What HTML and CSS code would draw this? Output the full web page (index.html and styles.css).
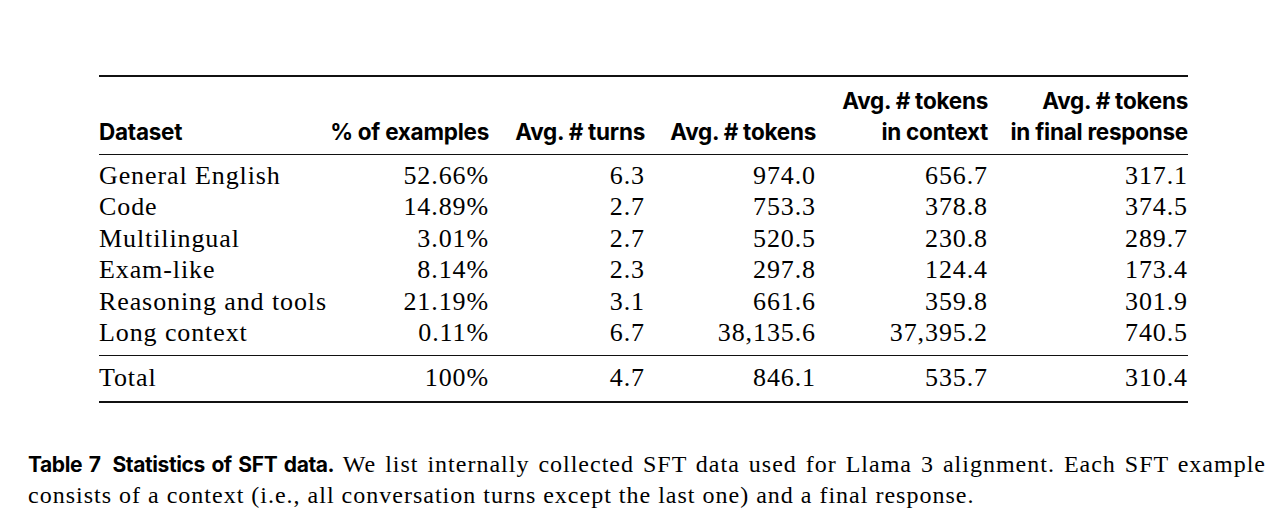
FILE: index.html
```html
<!DOCTYPE html>
<html>
<head>
<meta charset="utf-8">
<link rel="stylesheet" href="styles.css">
</head>
<body>
<div class="page">
  <table class="stats">
    <colgroup>
      <col class="c1"><col class="c2"><col class="c3"><col class="c4"><col class="c5"><col class="c6">
    </colgroup>
    <thead>
      <tr>
        <th class="left">Dataset</th>
        <th>% of examples</th>
        <th>Avg. # turns</th>
        <th>Avg. # tokens</th>
        <th>Avg. # tokens<br>in context</th>
        <th>Avg. # tokens<br>in final response</th>
      </tr>
    </thead>
    <tbody class="body">
      <tr class="first"><td class="left">General English</td><td>52.66%</td><td>6.3</td><td>974.0</td><td>656.7</td><td>317.1</td></tr>
      <tr><td class="left">Code</td><td>14.89%</td><td>2.7</td><td>753.3</td><td>378.8</td><td>374.5</td></tr>
      <tr><td class="left">Multilingual</td><td>3.01%</td><td>2.7</td><td>520.5</td><td>230.8</td><td>289.7</td></tr>
      <tr><td class="left">Exam-like</td><td>8.14%</td><td>2.3</td><td>297.8</td><td>124.4</td><td>173.4</td></tr>
      <tr><td class="left">Reasoning and tools</td><td>21.19%</td><td>3.1</td><td>661.6</td><td>359.8</td><td>301.9</td></tr>
      <tr class="last"><td class="left">Long context</td><td>0.11%</td><td>6.7</td><td>38,135.6</td><td>37,395.2</td><td>740.5</td></tr>
    </tbody>
    <tbody class="total">
      <tr><td class="left">Total</td><td>100%</td><td>4.7</td><td>846.1</td><td>535.7</td><td>310.4</td></tr>
    </tbody>
  </table>
  <p class="caption"><span class="label num">Table 7</span><span class="label">Statistics of SFT data.</span> <span class="text">We list internally collected SFT data used for Llama 3 alignment. Each SFT example consists of a context (i.e., all conversation turns except the last one) and a final response.</span></p>
</div>
</body>
</html>
```

FILE: styles.css
```css
html, body {
  margin: 0;
  padding: 0;
  background: #ffffff;
}
.page {
  width: 1280px;
  height: 531px;
  padding-top: 75px;
  box-sizing: border-box;
  color: #000;
}
.stats {
  margin-left: 99px;
  width: 1089px;
  border-collapse: collapse;
  table-layout: fixed;
  border-top: 2px solid #111;
  border-bottom: 2px solid #111;
}
.c1 { width: 230px; }
.c2 { width: 160px; }
.c3 { width: 156px; }
.c4 { width: 171px; }
.c5 { width: 172px; }
.c6 { width: 200px; }
.stats th {
  font-family: Inter, "Liberation Sans", sans-serif;
  font-weight: 700;
  font-size: 22.5px;
  letter-spacing: -0.25px;
  line-height: 31px;
  text-align: right;
  vertical-align: bottom;
  padding: 8px 0 7px 0;
  white-space: nowrap;
  border-bottom: 1px solid #111;
}
.stats td {
  font-family: "Liberation Serif", serif;
  font-size: 26px;
  letter-spacing: 0.9px;
  line-height: 31.4px;
  height: 31.4px;
  text-align: right;
  padding: 0;
  white-space: nowrap;
}
.stats .left { text-align: left; }
.body tr.first td { padding-top: 5px; }
.body tr.last td { padding-bottom: 7px; border-bottom: 1px solid #111; }
.total td { padding: 6px 0 7px 0; }
.caption {
  margin: 46px 14px 0 28px;
  font-family: "Liberation Serif", serif;
  font-size: 24px;
  line-height: 30px;
  letter-spacing: 1px;
  text-align: justify;
}
.caption .label {
  font-family: Inter, "Liberation Sans", sans-serif;
  font-weight: 700;
  font-size: 21px;
  line-height: 30px;
  letter-spacing: -0.4px;
}
.caption .num {
  margin-right: 12px;
}
```
